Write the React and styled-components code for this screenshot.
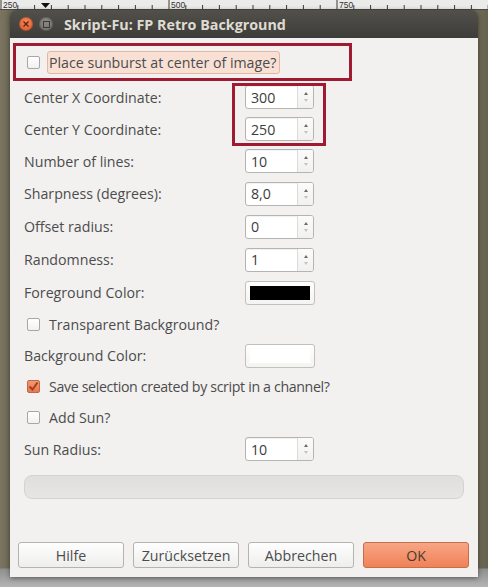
import React from 'react';
import styled, { createGlobalStyle } from 'styled-components';

const GlobalStyle = createGlobalStyle`
  html, body {
    margin: 0;
    padding: 0;
  }
  body {
    background: #6f6a57;
    font-family: "Open Sans", "Noto Sans", sans-serif;
  }
`;

const TEXT_SIZE = '14.2px';

const Screen = styled.div`
  position: relative;
  width: 488px;
  height: 587px;
  display: flex;
  flex-direction: column;
  overflow: hidden;
`;

const RulerStrip = styled.svg`
  display: block;
  flex: none;
  background: #ebebea;
`;

const Stage = styled.div`
  flex: 1;
  display: flex;
  padding: 0 10px;
  background:
    linear-gradient(to bottom, transparent 0, transparent 558px, #8f8f8f 559px, #b4b4b4 100%),
    linear-gradient(to right, #7b7461 0, #6f6a57 10px, #6f6a57 calc(100% - 10px), #67624f 100%);
`;

const Dialog = styled.div`
  flex: 1;
  height: 567px;
  display: flex;
  flex-direction: column;
  border-radius: 7px 7px 0 0;
  overflow: hidden;
  box-shadow: 0 1px 5px rgba(0, 0, 0, 0.45);
`;

const TitleBar = styled.div`
  height: 28px;
  flex: none;
  display: flex;
  align-items: center;
  padding-left: 9px;
  gap: 6px;
  background: linear-gradient(#51504b, #3d3c38);
`;

const WindowButton = styled.div`
  width: 14px;
  height: 14px;
  border-radius: 50%;
  display: flex;
  align-items: center;
  justify-content: center;
  background: ${(p) =>
    p.$close
      ? 'radial-gradient(circle at 50% 35%, #f4875a, #dc5523)'
      : 'radial-gradient(circle at 50% 35%, #8a8984, #6d6c67)'};
  box-shadow: inset 0 0 0 1px rgba(0, 0, 0, 0.2);
`;

const Title = styled.div`
  margin-left: 5px;
  color: #dfdbd2;
  font-size: 14.3px;
  font-weight: 700;
`;

const Body = styled.div`
  flex: 1;
  display: flex;
  flex-direction: column;
  padding: 8px 0 9px;
  background: #f2f1f0;
`;

const Form = styled.div`
  display: flex;
  flex-direction: column;
  padding: 0 14px;
`;

const Row = styled.div`
  height: ${(p) => p.$h || 32}px;
  display: grid;
  grid-template-columns: 221px auto;
  align-items: center;
  margin-top: ${(p) => p.$gap || 0}px;
`;

const Label = styled.span`
  color: #4c4c4c;
  font-size: ${TEXT_SIZE};
  white-space: nowrap;
`;

const CheckRow = styled.label`
  height: ${(p) => p.$h || 31}px;
  display: flex;
  align-items: center;
  gap: ${(p) => (p.$focus ? 7 : 9)}px;
  padding-left: 3px;
`;

const CheckLabel = styled.span`
  color: #4c4c4c;
  font-size: ${TEXT_SIZE};
  white-space: nowrap;
  letter-spacing: ${(p) => (p.$tight ? '-0.35px' : 'normal')};
  ${(p) =>
    p.$focus &&
    `
    padding: 1px 3px 1px 1px;
    background: #f8e0d4;
    border: 1px solid #e6b6a1;
    border-radius: 3px;
  `}
`;

const Box = styled.span`
  width: 13px;
  height: 13px;
  box-sizing: border-box;
  border-radius: 2px;
  display: flex;
  align-items: center;
  justify-content: center;
  border: 1px solid ${(p) => (p.$checked ? '#c4663f' : '#a9a7a2')};
  background: ${(p) =>
    p.$checked ? 'linear-gradient(#f09a75, #e6794f)' : 'linear-gradient(#ffffff, #f1f1f0)'};
`;

const Spin = styled.div`
  width: 69px;
  height: 24px;
  box-sizing: border-box;
  display: flex;
  border: 1px solid #b6b4b0;
  border-radius: 3px;
  background: #fff;
  box-shadow: inset 0 1px 1px rgba(0, 0, 0, 0.06);
`;

const SpinValue = styled.span`
  flex: 1;
  display: flex;
  align-items: center;
  padding-left: 5px;
  color: #3c3c3c;
  font-size: ${TEXT_SIZE};
`;

const SpinArrows = styled.span`
  width: 15px;
  display: flex;
  flex-direction: column;
  align-items: center;
  justify-content: center;
  gap: 4px;
  border-left: 1px solid #dcdbd8;
  background: linear-gradient(#fbfbfb, #f1f1f0);
  border-radius: 0 2px 2px 0;
`;

const Arrow = styled.span`
  width: 0;
  height: 0;
  border-left: 2px solid transparent;
  border-right: 2px solid transparent;
  ${(p) =>
    p.$down
      ? 'border-top: 3px solid #c2c1be;'
      : 'border-bottom: 3px solid #6a6a6a;'}
`;

const ColorButton = styled.div`
  width: 70px;
  height: 24px;
  box-sizing: border-box;
  display: flex;
  padding: 4px;
  border: 1px solid #c2c0bc;
  border-radius: 3px;
  background: linear-gradient(#ffffff, #f3f3f2);
`;

const Swatch = styled.span`
  flex: 1;
  background: ${(p) => p.$color};
`;

const Progress = styled.div`
  height: 24px;
  margin: 10px 14px 0;
  box-sizing: border-box;
  border-radius: 8px;
  border: 1px solid #d4d3d0;
  background: linear-gradient(#e0dfdd, #e6e5e3);
`;

const ButtonBar = styled.div`
  margin-top: auto;
  padding: 0 9px 0 8px;
  display: grid;
  grid-template-columns: repeat(4, 1fr);
  gap: 9px;
`;

const Button = styled.button`
  height: 26px;
  padding: 0;
  border-radius: 3px;
  font-family: inherit;
  font-size: ${TEXT_SIZE};
  border: 1px solid ${(p) => (p.$primary ? '#c66d4b' : '#b5b3af')};
  color: ${(p) => (p.$primary ? '#4b3b33' : '#4c4c4c')};
  background: ${(p) =>
    p.$primary ? 'linear-gradient(#f8a584, #ef8258)' : 'linear-gradient(#fefefe, #eeeeed)'};
`;

const Marker = styled.div`
  position: absolute;
  left: ${(p) => p.$x}px;
  top: ${(p) => p.$y}px;
  width: ${(p) => p.$w}px;
  height: ${(p) => p.$h}px;
  box-sizing: border-box;
  border: 3px solid #a01b32;
  pointer-events: none;
`;

const Ruler = () => {
  const ticks = [];
  for (let i = 0; i < 30; i++) {
    const x = 1 + i * 16.8;
    const major = i % 10 === 0;
    ticks.push(
      <line
        key={i}
        x1={x}
        x2={x}
        y1={major ? 0 : 5}
        y2={10}
        stroke="#3a3a3a"
        strokeWidth="1"
      />
    );
  }
  const labelProps = { y: 8, fontSize: 8.5, fontFamily: 'Liberation Sans, sans-serif', fill: '#333' };
  return (
    <RulerStrip width="488" height="10" viewBox="0 0 488 10">
      {ticks}
      <text x="3" {...labelProps}>250</text>
      <text x="171" {...labelProps}>500</text>
      <text x="339" {...labelProps}>750</text>
      <polygon points="41,3 50,3 45.5,8" fill="#111" />
      <line x1="0" x2="488" y1="9.5" y2="9.5" stroke="#4a4a48" />
    </RulerStrip>
  );
};

const Check = ({ checked }) => (
  <Box $checked={checked}>
    {checked && (
      <svg width="11" height="11" viewBox="0 0 11 11">
        <path d="M1.5 5.5 L4.5 8.5 L9.5 1.5" fill="none" stroke="#a63b22" strokeWidth="2" />
      </svg>
    )}
  </Box>
);

const SpinField = ({ value }) => (
  <Spin>
    <SpinValue>{value}</SpinValue>
    <SpinArrows>
      <Arrow />
      <Arrow $down />
    </SpinArrows>
  </Spin>
);

const App = () => {
  return (
    <Screen>
      <GlobalStyle />
      <Ruler />
      <Stage>
        <Dialog>
          <TitleBar>
            <WindowButton $close>
              <svg width="6" height="6" viewBox="0 0 6 6">
                <path d="M0.5 0.5 L5.5 5.5 M5.5 0.5 L0.5 5.5" stroke="#5a2210" strokeWidth="1.3" />
              </svg>
            </WindowButton>
            <WindowButton>
              <svg width="7" height="7" viewBox="0 0 7 7">
                <rect x="0.5" y="0.5" width="6" height="6" fill="none" stroke="#3a3a36" strokeWidth="1" />
              </svg>
            </WindowButton>
            <Title>Skript-Fu: FP Retro Background</Title>
          </TitleBar>
          <Body>
            <Form>
              <CheckRow $h={32} $focus>
                <Check />
                <CheckLabel $focus>Place sunburst at center of image?</CheckLabel>
              </CheckRow>
              <Row $gap={3}>
                <Label>Center X Coordinate:</Label>
                <SpinField value="300" />
              </Row>
              <Row>
                <Label>Center Y Coordinate:</Label>
                <SpinField value="250" />
              </Row>
              <Row>
                <Label>Number of lines:</Label>
                <SpinField value="10" />
              </Row>
              <Row $h={33}>
                <Label>Sharpness (degrees):</Label>
                <SpinField value="8,0" />
              </Row>
              <Row $h={33}>
                <Label>Offset radius:</Label>
                <SpinField value="0" />
              </Row>
              <Row $h={33}>
                <Label>Randomness:</Label>
                <SpinField value="1" />
              </Row>
              <Row $h={33}>
                <Label>Foreground Color:</Label>
                <ColorButton>
                  <Swatch $color="#000" />
                </ColorButton>
              </Row>
              <CheckRow>
                <Check />
                <CheckLabel>Transparent Background?</CheckLabel>
              </CheckRow>
              <Row $h={31}>
                <Label>Background Color:</Label>
                <ColorButton>
                  <Swatch $color="#fff" />
                </ColorButton>
              </Row>
              <CheckRow>
                <Check checked />
                <CheckLabel $tight>Save selection created by script in a channel?</CheckLabel>
              </CheckRow>
              <CheckRow>
                <Check />
                <CheckLabel>Add Sun?</CheckLabel>
              </CheckRow>
              <Row>
                <Label>Sun Radius:</Label>
                <SpinField value="10" />
              </Row>
            </Form>
            <Progress />
            <ButtonBar>
              <Button>Hilfe</Button>
              <Button>Zurücksetzen</Button>
              <Button>Abbrechen</Button>
              <Button $primary>OK</Button>
            </ButtonBar>
          </Body>
        </Dialog>
      </Stage>
      <Marker $x={13} $y={43} $w={339} $h={38} />
      <Marker $x={232} $y={83} $w={94} $h={63} />
    </Screen>
  );
};

export default App;
